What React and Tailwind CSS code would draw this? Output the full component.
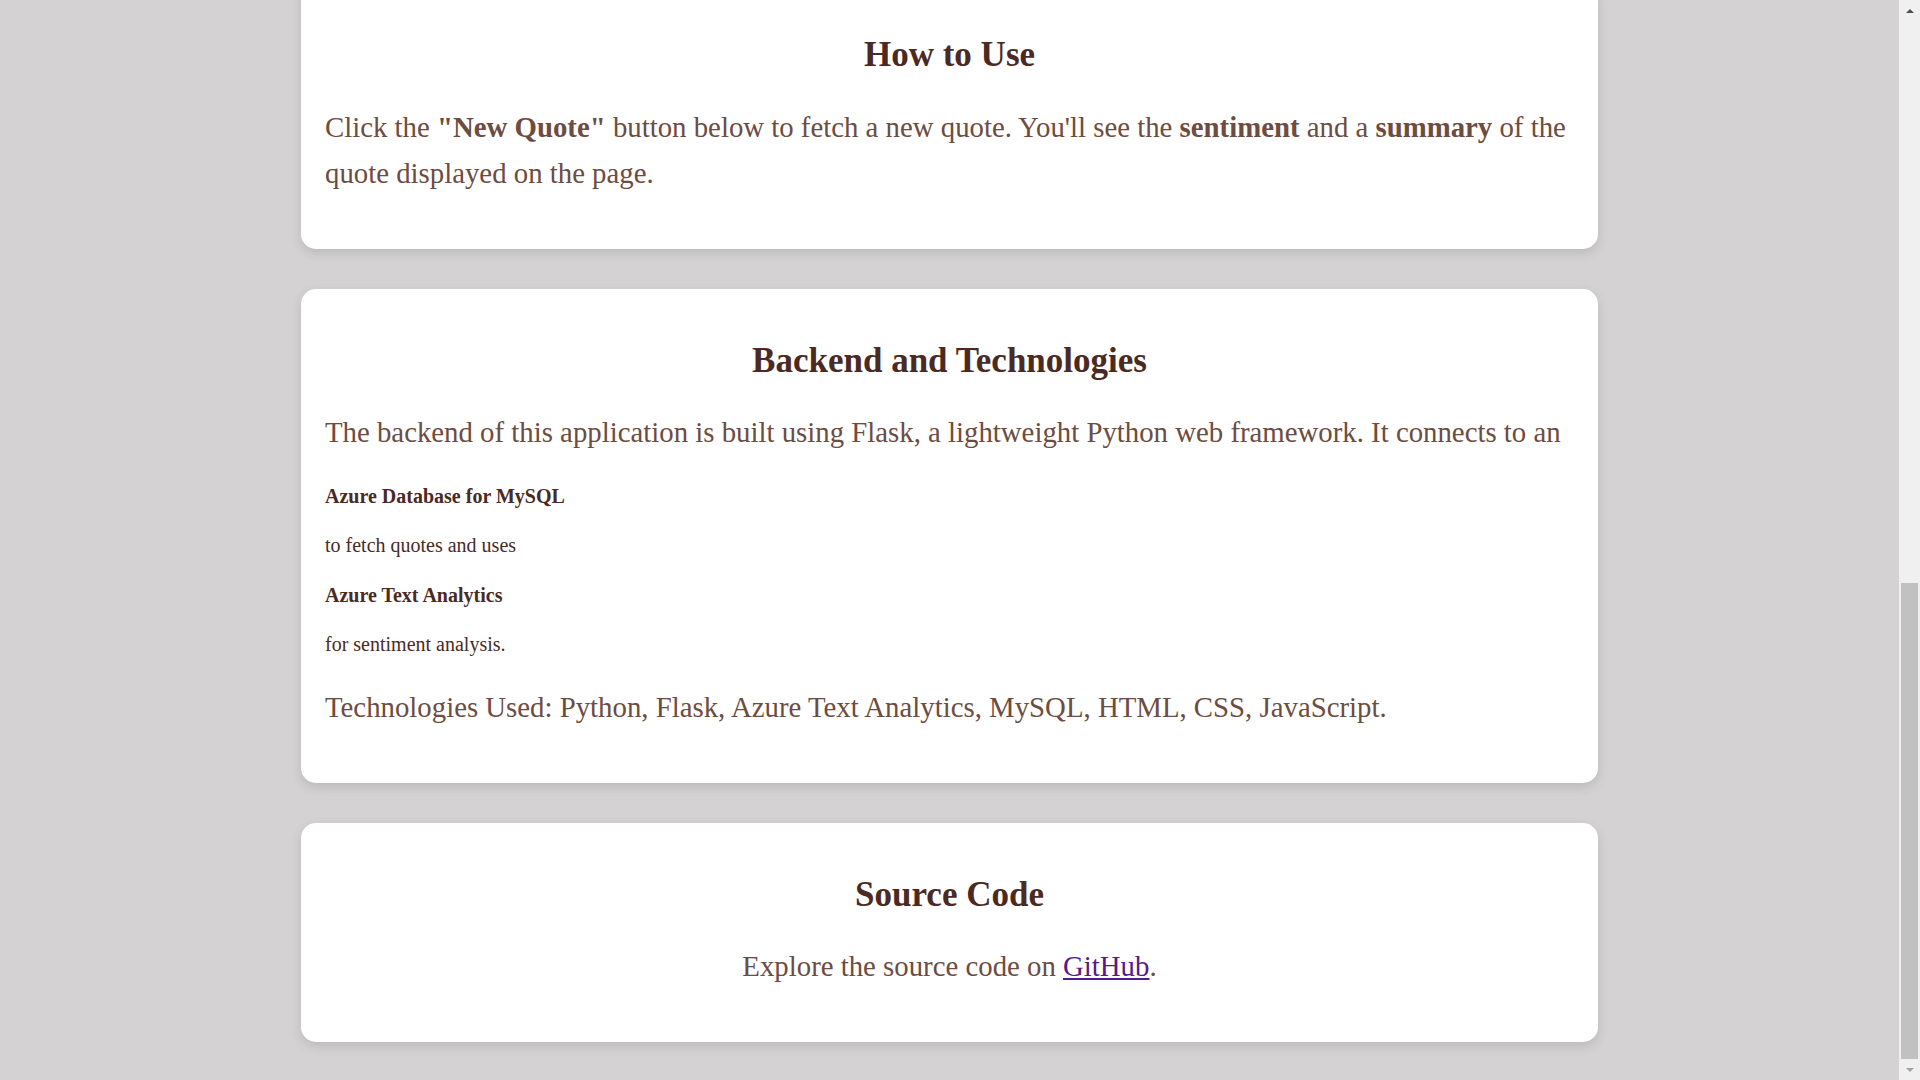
import React from "react"

// Bottom part of the "About" page, scrolled to the end.
const serif = "font-['Liberation_Serif','Times_New_Roman',serif]"

function Card({ title, children }) {
  return (
    <section className="w-[1297px] mx-auto shrink-0 bg-white rounded-[15px] p-6 shadow-[0_4px_12px_rgba(0,0,0,0.12)]">
      <h2 className="text-[35px] leading-[38.7px] font-bold text-center text-[#4b2a24] my-[29px]">{title}</h2>
      {children}
    </section>
  )
}

function Scrollbar() {
  return (
    <div className="w-[21px] h-screen shrink-0 bg-[#f0f0f0] flex flex-col">
      <div className="h-[21px] flex items-center justify-center">
        <div className="w-0 h-0 border-x-[4px] border-x-transparent border-b-[4px] border-b-[#505050]" />
      </div>
      <div className="flex-1" />
      <div className="mx-[2px] h-[476px] bg-[#c1c1c1]" />
      <div className="h-[21px] flex items-center justify-center">
        <div className="w-0 h-0 border-x-[4px] border-x-transparent border-t-[4px] border-t-[#a3a3a3]" />
      </div>
    </div>
  )
}

export default function App() {
  const big = "text-[28.8px] leading-[46px] text-[#6d4c41] my-[28.8px]"
  const small = "text-[20px] leading-[29.5px] text-[#4b2a24] my-5"
  return (
    <div className={`h-screen w-full flex bg-[#d4d2d3] overflow-hidden ${serif}`}>
      <main className="flex-1 flex flex-col justify-end gap-10 pb-[38px] overflow-hidden">
        <Card title="How to Use">
          <p className={big}>
            Click the <strong>"New Quote"</strong> button below to fetch a new quote. You'll see the{" "}
            <strong>sentiment</strong> and a <strong>summary</strong> of the quote displayed on the page.
          </p>
        </Card>
        <Card title="Backend and Technologies">
          <p className="text-[28.8px] leading-[46px] text-[#6d4c41] mt-[28.8px] mb-[26.5px]">
            The backend of this application is built using Flask, a lightweight Python web framework. It connects to an
          </p>
          <p className={small}><strong>Azure Database for MySQL</strong></p>
          <p className={small}>to fetch quotes and uses</p>
          <p className={small}><strong>Azure Text Analytics</strong></p>
          <p className={small}>for sentiment analysis.</p>
          <p className="text-[28.8px] leading-[46px] text-[#6d4c41] mt-6 mb-[28.8px]">
            Technologies Used: Python, Flask, Azure Text Analytics, MySQL, HTML, CSS, JavaScript.
          </p>
        </Card>
        <Card title="Source Code">
          <p className={`${big} text-center`}>
            Explore the source code on{" "}
            <a href="#" className="text-[#551a8b] underline">GitHub</a>.
          </p>
        </Card>
      </main>
      <Scrollbar />
    </div>
  )
}
